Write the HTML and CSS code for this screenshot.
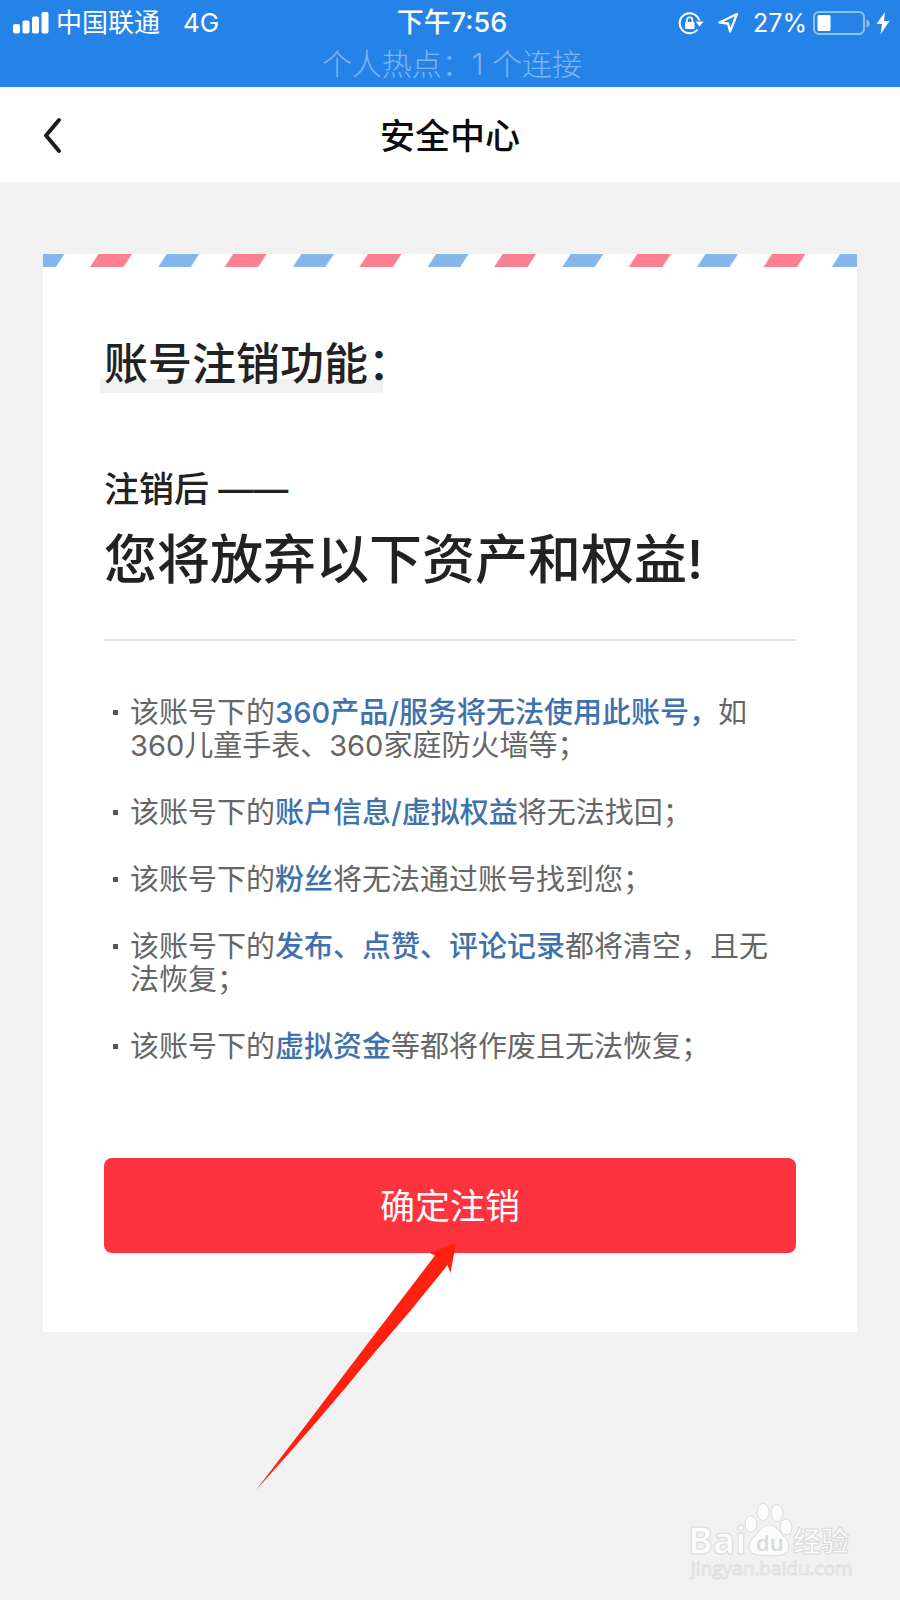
FILE: index.html
```html
<!DOCTYPE html>
<html lang="zh-CN">
<head>
<meta charset="utf-8">
<meta name="viewport" content="width=device-width, initial-scale=1">
<title>安全中心</title>
<link rel="stylesheet" href="styles.css">
</head>
<body>
<div class="status">
  <div class="status-row">
    <div class="status-left">
      <svg class="signal" width="36" height="22" viewBox="0 0 36 22" aria-hidden="true">
        <rect x="0" y="12" width="7" height="9.500" rx="2"/><rect x="9.500" y="8.500" width="7" height="13" rx="2"/><rect x="19" y="4.500" width="7" height="17" rx="2"/><rect x="28.500" y="0" width="7" height="21.500" rx="2"/>
      </svg>
      <span>中国联通</span>
      <span class="network">4G</span>
    </div>
    <div class="time">下午7:56</div>
    <div class="status-right">
      <svg width="26" height="24" viewBox="0 0 26 24" fill="none" stroke="#fff" stroke-width="2" aria-hidden="true">
        <path d="M19.500 18.500A10 10 0 1 1 21.300 9.500"/>
        <path d="M17.500 10.500h8l-4 5z" fill="#fff" stroke="none"/>
        <rect x="7" y="11" width="9.500" height="7" rx="1" fill="#fff" stroke="none"/>
        <path d="M9 11V9a2.700 2.700 0 0 1 5.400 0v2" stroke-width="1.600"/>
      </svg>
      <svg width="22" height="22" viewBox="0 0 22 22" fill="none" stroke="#fff" stroke-width="2.300" stroke-linejoin="round" aria-hidden="true">
        <path d="M20 2L2.500 10.500L11 11.500L13 19.500Z"/>
      </svg>
      <span class="percent">27%</span>
      <svg class="battery" width="78" height="26" viewBox="0 0 78 26" aria-hidden="true">
        <rect x="1" y="2" width="50" height="22" rx="5" fill="none" stroke="#8fc1f5" stroke-width="2"/>
        <rect x="4.500" y="5" width="13" height="16" rx="1.500" fill="#fff"/>
        <path d="M53.500 9.500q3 1 3 4t-3 4z" fill="#8fc1f5"/>
        <path d="M72 2L63.500 14H69L67.500 24.500L76.500 11H71Z" fill="#fff"/>
      </svg>
    </div>
  </div>
  <div class="hotspot">个人热点：1 个连接</div>
</div>

<header class="nav">
  <button class="back" type="button" aria-label="返回">
    <svg width="20" height="38" viewBox="0 0 20 38" fill="none" stroke="#1c1c1c" stroke-width="4" stroke-linecap="round" stroke-linejoin="round" aria-hidden="true"><path d="M16 3L3 18.500L16 34"/></svg>
  </button>
  <h1>安全中心</h1>
</header>

<main class="card">
  <svg class="stripes" width="100%" height="13" aria-hidden="true">
    <defs>
      <pattern id="airmail" width="134.700" height="13" patternUnits="userSpaceOnUse">
        <path d="M-11 0H21.500L13 13H-19.500ZM123.700 0H156.200L147.700 13H115.200Z" fill="#84b6ec"/>
        <path d="M55.500 0H89L80.500 13H47Z" fill="#fa7f91"/>
      </pattern>
    </defs>
    <rect width="100%" height="13" fill="url(#airmail)"/>
  </svg>
  <div class="body">
    <h2 class="feature">账号注销功能：</h2>
    <p class="after">注销后 ——</p>
    <h2 class="warning">您将放弃以下资产和权益!</h2>
    <hr class="rule">
    <ul class="losses">
      <li><span>该账号下的<strong>360产品/服务将无法使用此账号，</strong>如360儿童手表、360家庭防火墙等；</span></li>
      <li><span>该账号下的<strong>账户信息/虚拟权益</strong>将无法找回；</span></li>
      <li><span>该账号下的<strong>粉丝</strong>将无法通过账号找到您；</span></li>
      <li><span>该账号下的<strong>发布、点赞、评论记录</strong>都将清空，且无法恢复；</span></li>
      <li><span>该账号下的<strong>虚拟资金</strong>等都将作废且无法恢复；</span></li>
    </ul>
    <div class="action">
      <button class="confirm" type="button">确定注销</button>
      <svg class="pointer" width="202" height="248" viewBox="0 0 202 248" aria-hidden="true">
        <path d="M200 0L174 10L179 12.500Q145 57 109 104Q54 177 0 247Q62 179 119 109Q157 66 191.500 22L194.500 30Z" fill="#ff2010"/>
      </svg>
    </div>
  </div>
</main>

<footer class="mark">
  <svg width="174" height="90" viewBox="-4 0 174 90" role="img" aria-label="Baidu经验 jingyan.baidu.com">
    <g fill="#fcfcfc" stroke="#d9d9d9" stroke-width="1">
      <ellipse cx="61" cy="24" rx="6" ry="8"/><ellipse cx="73" cy="12" rx="6" ry="8.500"/><ellipse cx="87" cy="13" rx="6" ry="8.500"/><ellipse cx="96" cy="27" rx="6" ry="8"/>
      <path d="M79 25C86 25 89 31 94 37C101 43 101 55 90 55C85 56 74 56 69 55C57 55 57 43 64 37C69 32 72 25 79 25Z"/>
      <text class="mark-bai" x="-2" y="54">Bai</text>
      <text class="mark-cn" x="103" y="52">经验</text>
      <text class="mark-url" x="1" y="75">jingyan.baidu.com</text>
    </g>
    <text class="mark-du" x="66" y="51">du</text>
  </svg>
</footer>
</body>
</html>
```
FILE: styles.css
```css
* { box-sizing: border-box; }

body {
  margin: 0;
  background: #f1f1f1;
  color: #222;
  font-family: Inter, "Noto Sans CJK SC", sans-serif;
}

h1, h2, p, ul { margin: 0; padding: 0; }

button {
  border: 0;
  padding: 0;
  font: inherit;
  cursor: pointer;
}

/* status bar */
.status {
  background: #2583e8;
  color: #fff;
  padding: 4px 9px 1px 13px;
}

.status-row {
  display: grid;
  grid-template-columns: 1fr auto 1fr;
  align-items: center;
  height: 38px;
  font-size: 26px;
  line-height: 38px;
}

.status-left, .status-right {
  display: flex;
  align-items: center;
}

.status-left { gap: 7px; }
.signal { fill: #fff; }
.network { margin-left: 16px; }
.time { font-size: 27px; font-weight: 500; }
.status-right { justify-content: flex-end; }
.status-right svg + svg { margin-left: 13px; }
.percent { margin-left: 14px; font-size: 25px; }
.status-right .battery { margin-left: 6px; }

.hotspot {
  color: #7cb5f4;
  font-size: 30px;
  font-weight: 300;
  line-height: 44px;
  text-align: center;
}

/* title bar */
.nav {
  display: grid;
  grid-template-columns: 1fr auto 1fr;
  align-items: center;
  height: 96px;
  padding: 2px 43px 0;
  background: #fff;
  border-bottom: 1px solid #f6f6f6;
}

.back {
  display: flex;
  justify-self: start;
  background: none;
}

.nav h1 {
  color: #0c0c0c;
  font-size: 35px;
  font-weight: 500;
  line-height: 50px;
}

/* letter card */
.card {
  margin: 71px 43px 0;
  background: #fff;
}

.stripes { display: block; }
.body { padding: 67px 61px 79px; }

.feature {
  position: relative;
  z-index: 0;
  width: fit-content;
  font-size: 44px;
  font-weight: 500;
  line-height: 60px;
}

.feature::before {
  content: "";
  position: absolute;
  z-index: -1;
  left: -4px;
  right: 29px;
  bottom: 1px;
  height: 14px;
  background: #f1f1f1;
}

.after {
  margin-top: 75px;
  font-size: 35px;
  font-weight: 500;
  line-height: 40px;
}

.warning {
  margin-top: 16px;
  font-size: 53px;
  font-weight: 500;
  line-height: 70px;
}

.rule {
  height: 2px;
  margin: 44px 0 55px;
  border: 0;
  background: #e4e4e4;
}

.losses {
  display: flex;
  flex-direction: column;
  gap: 34px;
  padding: 0 8px 0 9px;
  color: #666;
  font-size: 29px;
  line-height: 33px;
  list-style: none;
}

.losses li {
  display: grid;
  grid-template-columns: 5px 1fr;
  gap: 12px;
}

.losses li::before {
  content: "";
  height: 5px;
  margin-top: 14px;
  background: #555;
}

.losses strong {
  color: #3f72ab;
  font-weight: 500;
}

.action {
  position: relative;
  margin-top: 95px;
}

.confirm {
  display: block;
  width: 100%;
  padding: 23px 0 22px;
  border-radius: 8px;
  background: #fd333f;
  color: #fff;
  font-size: 35px;
  line-height: 50px;
}

.pointer {
  position: absolute;
  top: 85px;
  left: calc(50% - 194px);
  pointer-events: none;
}

/* site mark */
.mark {
  display: flex;
  justify-content: flex-end;
  padding: 168px 40px 8px;
}

.mark text { font-family: "Open Sans", "Noto Sans CJK SC", sans-serif; }
.mark .mark-bai { font-size: 37px; font-weight: 700; }
.mark .mark-cn { font-size: 28px; font-weight: 700; }
.mark .mark-url { font-size: 19px; stroke: #dedede; }
.mark .mark-du { font-size: 22px; font-weight: 600; fill: #d9d9d9; }
```
